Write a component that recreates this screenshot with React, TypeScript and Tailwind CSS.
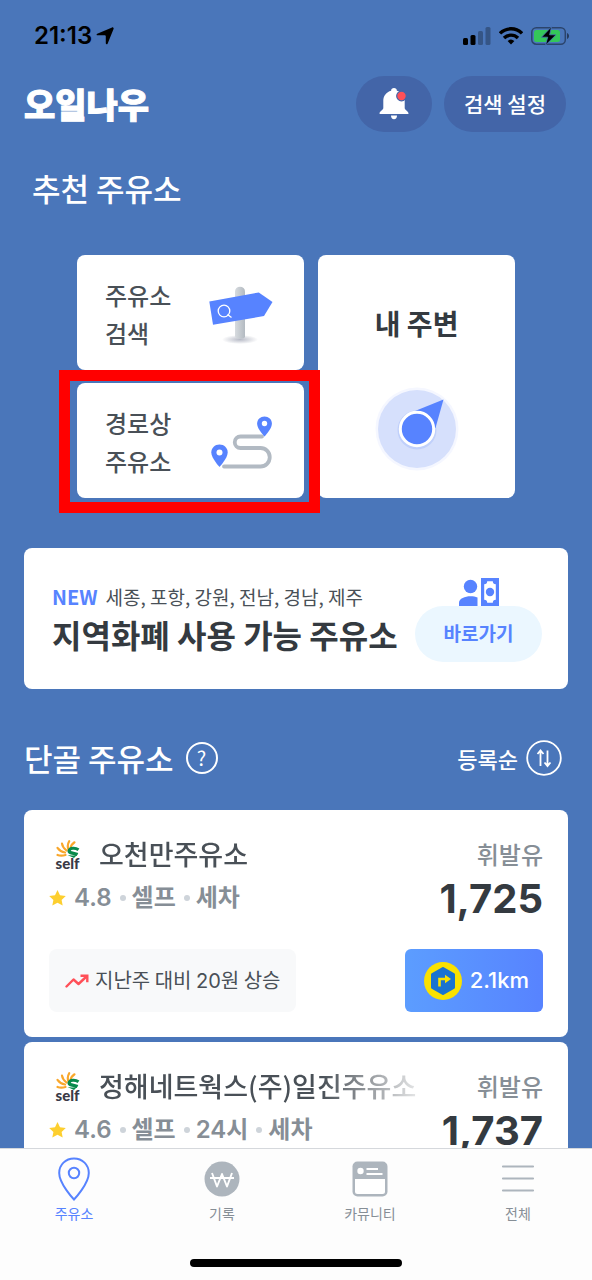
import { useState } from "react";
import type { ReactNode } from "react";

type Station = {
  name: string;
  rating: string;
  tags: string[];
  fuel: string;
  price: string;
  weekly?: number;
  distance?: string;
};

const stations: Station[] = [
  {
    name: "오천만주유소",
    rating: "4.8",
    tags: ["셀프", "세차"],
    fuel: "휘발유",
    price: "1,725",
    weekly: 20,
    distance: "2.1km",
  },
  {
    name: "정해네트웍스(주)일진주유소",
    rating: "4.6",
    tags: ["셀프", "24시", "세차"],
    fuel: "휘발유",
    price: "1,737",
  },
];

function StatusBar() {
  return (
    <div className="flex h-[72px] shrink-0 items-center justify-between pl-[34px] pr-[23px] text-black">
      <div className="flex items-center gap-1">
        <span className="font-['Inter','Noto_Sans_CJK_KR',sans-serif] text-2xl font-semibold">21:13</span>
        <svg className="h-[18px] w-[18px]" viewBox="0 0 16 16" fill="currentColor">
          <path d="M15.4.6c.4.3.4.7.2 1.100L10.300 14.800c-.4.9-1.600.7-1.600-.3V8.200c0-.6-.3-.9-.9-.9H1.400C.4 7.300.2 6.300 1.100 5.900L14.300.400c.4-.2.8-.1 1.100.2z" />
        </svg>
      </div>
      <div className="flex items-center gap-2">
        <svg className="h-[18px] w-7" viewBox="0 0 28 18" fill="currentColor">
          <rect x="0" y="11" width="5" height="7" rx="1.500" />
          <rect x="7.500" y="8" width="5" height="10" rx="1.500" />
          <rect x="15" y="4" width="5" height="14" rx="1.500" opacity=".28" />
          <rect x="22.500" y="0" width="5" height="18" rx="1.500" opacity=".28" />
        </svg>
        <svg className="h-[18px] w-6" viewBox="0 0 24 18" fill="none" stroke="currentColor" strokeWidth="3.400">
          <path d="M1 6.400a15.500 15.500 0 0 1 22 0" />
          <path d="M5 11a10 10 0 0 1 14 0" />
          <path d="M12 17.500l-3.400-3.400a5 5 0 0 1 6.800 0z" fill="currentColor" stroke="none" />
        </svg>
        <svg className="h-5 w-[38px]" viewBox="0 0 38 20">
          <rect x=".8" y="1.800" width="33.500" height="16.400" rx="4.500" fill="none" stroke="#000" strokeOpacity=".42" strokeWidth="1.500" />
          <path d="M36 7v6c1.300-.5 2-1.700 2-3s-.7-2.500-2-3z" fill="#000" opacity=".5" />
          <rect x="3" y="4" width="26" height="12" rx="2.500" fill="#34c759" />
          <path d="M20.500.8L10.500 11.200h6.200L14.500 19.200 25 8.800h-6.400z" fill="#000" stroke="#4a76ba" strokeWidth=".8" />
        </svg>
      </div>
    </div>
  );
}

function BellIcon() {
  return (
    <svg className="h-8 w-[30px]" viewBox="0 0 30 32">
      <path
        d="M15 0c-1.700 0-2.900 1.100-2.900 2.700C7.300 4 4.300 8 4.300 12.500v7.500c0 2-3.500 3.200-3.800 5.200-.1.600.2.800.7.800h27.600c.5 0 .8-.2.700-.8-.3-2-3.800-3.200-3.800-5.200v-7.500c0-4.500-3-8.500-7.800-9.800C17.900 1.100 16.700 0 15 0z"
        fill="#fff"
      />
      <path d="M12 27.500h6c0 2.200-1.200 3.700-3 3.700s-3-1.500-3-3.700z" fill="#fff" />
      <circle cx="22.500" cy="8" r="4.800" fill="#ff5058" stroke="#4365a8" strokeWidth="1.200" />
    </svg>
  );
}

function SignpostIcon() {
  return (
    <svg className="h-[60px] w-16 shrink-0" viewBox="0 0 64 60">
      <defs>
        <linearGradient id="pole" x1="0" x2="1" y1="0" y2="0">
          <stop offset="0%" stopColor="#d7dbdf" />
          <stop offset="100%" stopColor="#b3bac1" />
        </linearGradient>
        <radialGradient id="poleShadow">
          <stop offset="0%" stopColor="#a5a9b8" stopOpacity=".8" />
          <stop offset="100%" stopColor="#a5a9b8" stopOpacity="0" />
        </radialGradient>
      </defs>
      <ellipse cx="31" cy="54.500" rx="18" ry="4.500" fill="url(#poleShadow)" />
      <path d="M26 6.500a5 4.800 0 0 1 10 0v45a5 2.200 0 0 1-10 0z" fill="url(#pole)" />
      <path d="M.300 16.500L49.800 7.500l13.700 9.500L55 31 4 39.800z" fill="#5783ff" />
      <g fill="none" stroke="#fff" strokeWidth="1.300">
        <circle cx="15" cy="26" r="5.800" />
        <path d="M18.500 29.500l4 3" />
      </g>
    </svg>
  );
}

function RouteIcon() {
  return (
    <svg className="h-[54px] w-[62px] shrink-0" viewBox="0 0 62 54">
      <path
        d="M13 50.500h36.500a9 9 0 0 0 0-18.500H29.500a5.700 5.700 0 0 1 0-11.500H51"
        fill="none"
        stroke="#b2bac3"
        strokeWidth="3.800"
        strokeLinecap="round"
      />
      <path d="M8.500 28.500c4.600 0 8.200 3.500 8.200 8 0 5.600-8.200 14.500-8.200 14.500S.300 42.100.300 36.500c0-4.500 3.600-8 8.200-8z" fill="#5783ff" />
      <circle cx="8.500" cy="36.500" r="3" fill="#fff" />
      <path d="M53.500.500c4.100 0 7.400 3.100 7.400 7.200 0 5.200-7.400 12.800-7.400 12.800s-7.400-7.600-7.400-12.800c0-4.100 3.300-7.200 7.400-7.200z" fill="#5783ff" />
      <circle cx="53.500" cy="7.500" r="2.700" fill="#fff" />
    </svg>
  );
}

function CompassIcon() {
  return (
    <svg className="h-[84px] w-[84px]" viewBox="0 0 84 84">
      <circle cx="42" cy="42" r="41.500" fill="#f5f7ff" />
      <circle cx="42" cy="42" r="39" fill="#d6e0fc" />
      <circle cx="42" cy="43" r="19.500" fill="#a9bffa" opacity=".5" />
      <path d="M68.500 12.500L40 24l20.500 17z" fill="#5783ff" />
      <circle cx="42" cy="42" r="16.700" fill="#5783ff" stroke="#fff" strokeWidth="3" />
    </svg>
  );
}

function LocalMoneyIcon() {
  return (
    <svg className="h-7 w-10" viewBox="0 0 40 28" fill="#5783ff">
      <circle cx="11.500" cy="8.500" r="6.700" />
      <path d="M0 28v-3.500c0-4 6-6.300 11.500-6.300 2.700 0 5 .4 7 1.200V28z" />
      <path d="M22 0h18v28H22z" />
      <path d="M28.200 3.200h5.600a3 3 0 0 0 3 3v15.600a3 3 0 0 0-3 3h-5.600a3 3 0 0 0-3-3V6.200a3 3 0 0 0 3-3z" fill="#fff" />
      <circle cx="31" cy="14" r="4.200" />
    </svg>
  );
}

function SelfLogo() {
  return (
    <div className="flex w-[37px] shrink-0 flex-col items-center">
      <svg className="h-[18px] w-6" viewBox="0 0 24 18">
        <g fill="none" stroke="#f9a72b" strokeWidth="2.200" strokeLinecap="round">
          <path d="M9.500 15c-3 .9-5.500.9-8 0" />
          <path d="M9 12.500C6 12 3.300 10.300 1.500 7.800" />
          <path d="M10.500 10.500C8 8.500 6.300 6.200 6 3.500" />
          <path d="M12.500 9.500C11.300 6.500 11.800 3.500 13.200 1.200" />
          <path d="M14.500 8.500c.3-2.700 1.800-4.800 4-6.200" />
        </g>
        <path d="M22.500 9.800c-3.500-2.400-8.500-1.900-9.300.7-.9 3 5.500 2.400 8.300 4" fill="none" stroke="#088a4b" strokeWidth="3.200" />
        <path d="M11.500 15c3 .6 7 1 10.500-1l-4 4z" fill="#088a4b" />
      </svg>
      <span className="font-['Lato',sans-serif] text-[15px] font-black leading-[10px] text-[#3a3a46]">self</span>
    </div>
  );
}

function StarIcon() {
  return (
    <svg className="h-4 w-[17px] shrink-0" viewBox="0 0 17 16" fill="#fdcf2f">
      <path d="M8.500 0l2.500 5.200 5.800.700-4.200 4 1.100 5.700-5.200-2.800-5.200 2.800 1.100-5.700-4.200-4L6 5.200z" />
    </svg>
  );
}

function TrendIcon() {
  return (
    <svg className="h-3.5 w-6 shrink-0" viewBox="0 0 24 14" fill="none" stroke="#ff5058" strokeWidth="2.400">
      <path d="M1.500 12.500l7-7 5 4.500L21.500 2.500" strokeLinecap="round" strokeLinejoin="round" />
      <path d="M15.500 1.800h6.800v6.500" />
    </svg>
  );
}

function NaviIcon() {
  return (
    <svg className="h-[38px] w-[38px] shrink-0" viewBox="0 0 38 38">
      <circle cx="19" cy="19" r="19" fill="#fae100" />
      <path d="M19 6.500l10.500 6v13L19 31.500l-10.500-6v-13z" fill="#1a73d0" stroke="#1a73d0" strokeWidth="3" strokeLinejoin="round" />
      <path d="M15.500 24.500V17H22" fill="none" stroke="#fae100" strokeWidth="2.600" />
      <path d="M21 12.800l6 4.200-6 4.300z" fill="#fae100" />
    </svg>
  );
}

function ActionCard({ title, icon, highlighted }: { title: ReactNode; icon: ReactNode; highlighted?: boolean }) {
  return (
    <button
      type="button"
      className="relative flex h-[115px] items-center justify-between rounded-lg bg-white pl-7 pr-[31px] text-left text-2xl font-medium leading-[38px] text-[#495057]"
    >
      <span className="pt-0.5">{title}</span>
      <span className="pt-1">{icon}</span>
      {highlighted && (
        <span className="pointer-events-none absolute -bottom-[15px] -left-[18px] -right-4 -top-[13px] z-10 border-[11px] border-[#ff0000]" />
      )}
    </button>
  );
}

function StationCard({ station }: { station: Station }) {
  return (
    <article className="rounded-lg bg-white px-[25px] pb-[25px] pt-[22px]">
      <div className="flex h-11 items-center justify-between">
        <div className="flex min-w-0 items-center">
          <SelfLogo />
          <h3 className="ml-[13px] w-[318px] overflow-hidden whitespace-nowrap text-[27px] font-medium leading-10 text-[#495057] [mask-image:linear-gradient(to_right,black_70%,transparent_105%)]">
            {station.name}
          </h3>
        </div>
        <span className="shrink-0 text-2xl font-medium text-[#868e96]">{station.fuel}</span>
      </div>
      <div className="flex h-11 items-center justify-between">
        <div className="flex items-center gap-2 font-['Inter','Noto_Sans_CJK_KR',sans-serif] text-2xl font-semibold text-[#868e96]">
          <StarIcon />
          <span>{station.rating}</span>
          {station.tags.map((tag) => (
            <span key={tag} className="flex items-center gap-1.5">
              <i className="h-1.5 w-1.5 rounded-full bg-[#ced4da]" />
              <span>{tag}</span>
            </span>
          ))}
        </div>
        <strong className="pt-0.5 font-['Inter',sans-serif] text-[40px] font-bold leading-[44px] text-[#343a40]">{station.price}</strong>
      </div>
      {station.distance && (
        <div className="mt-[29px] flex h-[63px] items-stretch justify-between">
          <p className="flex items-center gap-1.5 rounded-lg bg-[#f8f9fa] px-4 text-xl text-[#495057]">
            <TrendIcon />
            <span>
              지난주 대비 <span className="font-['Inter',sans-serif]">{station.weekly}</span>원 상승
            </span>
          </p>
          <button
            type="button"
            className="flex items-center gap-2 rounded-md bg-linear-to-r from-[#5c9dff] to-[#5783ff] pl-[19px] pr-3.5 font-['Inter',sans-serif] text-[22px] font-medium text-white"
          >
            <NaviIcon />
            {station.distance}
          </button>
        </div>
      )}
    </article>
  );
}

const tabs = [
  {
    label: "주유소",
    icon: (
      <svg className="h-11 w-9" viewBox="0 0 36 44" fill="none" stroke="currentColor" strokeWidth="2">
        <path d="M18 1.500c8.300 0 14.800 6.200 14.800 14.500C32.800 27 18 42.500 18 42.500S3.200 27 3.200 16C3.200 7.700 9.700 1.500 18 1.500z" />
        <circle cx="18" cy="16" r="5.200" />
      </svg>
    ),
  },
  {
    label: "기록",
    icon: (
      <svg className="h-11 w-9" viewBox="0 0 36 44">
        <circle cx="18" cy="22" r="17.500" fill="#adb5bd" />
        <path d="M8 16l5 13.500L18 17l5 12.500L28 16M6 21h24" fill="none" stroke="#fff" strokeWidth="1.900" strokeLinejoin="round" />
      </svg>
    ),
  },
  {
    label: "카뮤니티",
    icon: (
      <svg className="h-11 w-9" viewBox="0 0 36 44">
        <rect x=".500" y="4.500" width="35" height="35" rx="5" fill="#adb5bd" />
        <path d="M3 22h30v12.500a2.500 2.500 0 0 1-2.500 2.500h-25A2.500 2.500 0 0 1 3 34.500z" fill="#fff" />
        <circle cx="8.500" cy="14" r="3.200" fill="#fff" />
        <path d="M14.500 12H26M14.500 17H30.500" stroke="#fff" strokeWidth="2" />
      </svg>
    ),
  },
  {
    label: "전체",
    icon: (
      <svg className="h-11 w-9" viewBox="0 0 36 44" stroke="#adb5bd" strokeWidth="2.200" strokeLinecap="round">
        <path d="M3 9.500h30M3 21.500h30M3 33.500h30" />
      </svg>
    ),
  },
];

function TabBar() {
  const [active, setActive] = useState("주유소");

  return (
    <footer className="h-[132px] shrink-0 border-t border-[#d5d8dc] bg-[#fdfdfd] pt-2">
      <nav className="grid grid-cols-4">
        {tabs.map((tab) => (
          <button
            key={tab.label}
            type="button"
            onClick={() => setActive(tab.label)}
            className={
              tab.label === active
                ? "flex flex-col items-center gap-0.5 text-sm text-[#5783ff]"
                : "flex flex-col items-center gap-0.5 text-sm text-[#868e96]"
            }
          >
            {tab.icon}
            {tab.label}
          </button>
        ))}
      </nav>
      {/* Home indicator */}
      <div className="mx-auto mt-9 h-2 w-[212px] rounded-full bg-black" />
    </footer>
  );
}

export default function App() {
  return (
    <div className="flex h-screen flex-col bg-[#4a76ba] font-['Noto_Sans_CJK_KR',sans-serif]">
      <StatusBar />

      <main className="min-h-0 flex-1 overflow-y-auto px-6 pt-1 [scrollbar-width:none]">
        {/* Header */}
        <header className="flex h-14 items-center justify-between pr-0.5">
          <h1 className="text-[34px] font-black leading-none text-white [-webkit-text-stroke:1px_white]">오일나우</h1>
          <div className="flex h-full gap-3">
            <button type="button" aria-label="알림" className="flex w-[76px] items-center justify-center rounded-full bg-[#4365a8]">
              <BellIcon />
            </button>
            <button type="button" className="rounded-full bg-[#4365a8] px-5 text-[21px] font-medium text-white">
              검색 설정
            </button>
          </div>
        </header>

        {/* Recommended */}
        <h2 className="mt-[31px] pl-2 text-[31px] font-medium leading-[50px] text-white">추천 주유소</h2>
        <section className="mx-[53px] mt-[42px] grid grid-cols-[15fr_13fr] gap-3.5">
          <div className="flex flex-col gap-[13px]">
            <ActionCard title={<>주유소<br />검색</>} icon={<SignpostIcon />} />
            <ActionCard title={<>경로상<br />주유소</>} icon={<RouteIcon />} highlighted />
          </div>
          <button type="button" className="flex flex-col items-center rounded-lg bg-white pt-12 text-[28px] font-bold leading-10 text-[#343a40]">
            내 주변
            <span className="mt-11">
              <CompassIcon />
            </span>
          </button>
        </section>

        {/* Local currency banner */}
        <section className="mt-[50px] flex h-[141px] items-center justify-between rounded-lg bg-white pl-7 pr-[26px] pt-0.5">
          <div>
            <p className="text-[19px] leading-7 text-[#495057]">
              <span className="mr-2 text-xl font-bold text-[#5783ff]">NEW</span>
              세종, 포항, 강원, 전남, 경남, 제주
            </p>
            <p className="whitespace-nowrap text-[32px] font-bold leading-[46px] text-[#343a40]">지역화폐 사용 가능 주유소</p>
          </div>
          <div className="flex flex-col items-center">
            <LocalMoneyIcon />
            <a href="#local" className="flex h-14 w-[127px] items-center justify-center rounded-full bg-[#ebf7ff] text-[19px] font-bold text-[#5783ff]">
              바로가기
            </a>
          </div>
        </section>

        {/* Favourites */}
        <div className="mt-11 flex h-[50px] items-center justify-between pr-1.5 text-white">
          <div className="flex items-center gap-3">
            <h2 className="text-[31px] font-medium">단골 주유소</h2>
            <button type="button" aria-label="도움말" className="flex h-8 w-8 items-center justify-center rounded-full border-2 border-white text-xl">
              ?
            </button>
          </div>
          <button type="button" className="flex items-center gap-2 text-[22px] font-medium">
            등록순
            <svg className="h-9 w-9" viewBox="0 0 36 36" fill="none" stroke="currentColor" strokeWidth="1.800">
              <circle cx="18" cy="18" r="16.800" />
              <path d="M14.500 26V11M11.500 14l3-3.500 3 3.500M21.500 10.500v15M18.500 22.500l3 3.500 3-3.500" />
            </svg>
          </button>
        </div>
        <div className="mt-[27px] flex flex-col gap-[5px]">
          {stations.map((station) => (
            <StationCard key={station.name} station={station} />
          ))}
        </div>
      </main>

      <TabBar />
    </div>
  );
}
